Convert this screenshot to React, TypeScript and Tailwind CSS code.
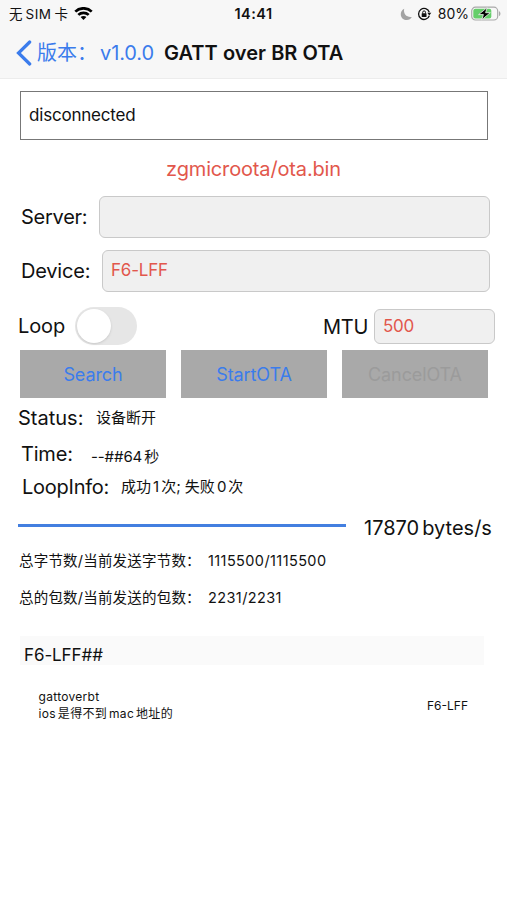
import React from 'react';

interface ActionProps {
  label: string;
  disabled?: boolean;
}

interface TotalProps {
  label: string;
  value: string;
}

const StatusBar = () => {
  return (
    <div className="flex h-[28px] items-center justify-between pl-[9px] pr-[6px] text-sm">
      <div className="flex w-[180px] items-center">
        <p className="pt-[1px] text-[13.5px]">无<span className="ml-[3px] mr-[3px] tracking-[0.5px]">SIM</span>卡</p>
        <svg className="ml-[6px] h-[14px] w-[19px]" viewBox="0 0 19 14" fill="none" stroke="#000" strokeWidth="2.7">
          <path d="M1.3 4.6C5.8 0.2 13.2 0.2 17.7 4.6" />
          <path d="M4.3 7.9C7.2 5.1 11.8 5.1 14.7 7.9" />
          <path d="M9.5 13.1L6.6 10.1C8.2 8.7 10.8 8.7 12.4 10.1Z" fill="#000" stroke="none" />
        </svg>
      </div>
      <p className="mr-[3px] text-[14.5px] font-semibold tracking-[0.5px]">14:41</p>
      <div className="flex w-[180px] items-center justify-end">
        <svg className="h-[13px] w-[13px]" viewBox="0 0 13 13" fill="#a3a3a3">
          <path d="M4.2 0.8C1.9 1.9 0.5 4.2 0.8 6.9C1.2 10.1 3.8 12.1 6.9 12C9.1 11.9 10.9 10.8 11.8 8.9C7 9.7 3 6.2 4.2 0.8Z" />
        </svg>
        <svg className="ml-[4px] h-[14px] w-[15px]" viewBox="0 0 15 14" fill="none" stroke="#111">
          <path d="M12.3 8.7A5.5 5.5 0 1 1 12.3 5.2" strokeWidth="1.3" />
          <path d="M10.3 5.7H14.3L12.3 8.4Z" fill="#111" stroke="none" />
          <rect x="4.7" y="6.3" width="4.8" height="3.7" rx="0.5" fill="#111" stroke="none" />
          <path d="M5.7 6.5V5.3A1.4 1.4 0 0 1 8.5 5.3V6.5" strokeWidth="1" />
        </svg>
        <p className="ml-[6px] text-[14px]">80%</p>
        <svg className="ml-[2px] h-[16px] w-[30px]" viewBox="0 0 30 16">
          <rect x="0.7" y="1.2" width="26" height="12.8" rx="3.8" fill="none" stroke="#a9a9a9" strokeWidth="1.2" />
          <path d="M28 5.2C29.9 5.7 29.9 9.5 28 10Z" fill="#a9a9a9" />
          <rect x="2.3" y="2.8" width="18" height="9.6" rx="2" fill="#65ce6a" />
          <path d="M16.2 1.6L7.6 8.6H12.4L10.8 13.7L19.3 6.700H14.600Z" fill="#000" stroke="#f7f7f7" strokeWidth="0.8" />
        </svg>
      </div>
    </div>
  );
};

const NavBar = () => {
  return (
    <div className="flex h-[50px] items-center pl-[16px]">
      <svg className="h-[26px] w-[16px]" viewBox="0 0 16 26" fill="none" stroke="#3b7cec" strokeWidth="3.2" strokeLinecap="round">
        <path d="M13.7 2L2.5 13L13.7 24" />
      </svg>
      <p className="ml-[5px] w-[63px] whitespace-nowrap text-[20px] text-[#3b7cec]">版本：</p>
      <p className="w-[64px] whitespace-nowrap text-[20px] tracking-[-0.1px] text-[#3b7cec]">v1.0.0</p>
      <p className="whitespace-nowrap text-[20px] font-semibold tracking-[0.05px]">GATT over BR OTA</p>
    </div>
  );
};

const ActionButton = (props: ActionProps) => {
  return (
    <button
      disabled={props.disabled}
      className={`h-[48px] w-[146px] bg-[#a9a9a9] pt-[1px] text-[18px] tracking-[-0.1px] ${props.disabled ? 'text-[#9b9b9b]' : 'text-[#3b7cec]'}`}
    >
      {props.label}
    </button>
  );
};

const TotalRow = (props: TotalProps) => {
  return (
    <div className="flex h-[37px] items-center pl-[19px] text-[14.5px] tracking-[0.2px]">
      <p className="w-[189px] whitespace-nowrap">{props.label}</p>
      <p className="tracking-[0.4px]">{props.value}</p>
    </div>
  );
};

const App = () => {
  return (
    <div className="h-[900px] w-[507px] overflow-hidden bg-white font-['Inter','Noto_Sans_CJK_SC',sans-serif] text-[#111]">
      <div className="h-[79px] border-b border-[#ececec] bg-[#f7f7f7]">
        <StatusBar />
        <NavBar />
      </div>

      <div className="ml-[20px] mt-[12px] flex h-[49px] w-[468px] items-center border border-[#777] pl-[8px] text-[17px] tracking-[-0.2px]">
        disconnected
      </div>
      <p className="flex h-[56px] items-center justify-center pt-[2px] text-[20px] tracking-[-0.15px] text-[#e2574c]">zgmicroota/ota.bin</p>

      <div className="flex h-[42px] items-center pl-[21px] text-[20px]">
        <p className="w-[78px] tracking-[-0.25px]">Server:</p>
        <div className="h-[42px] w-[391px] rounded-[6px] border border-[#c9c9c9] bg-[#f0f0f0]"></div>
      </div>
      <div className="mt-[12px] flex h-[42px] items-center pl-[21px] text-[20px]">
        <p className="w-[81px] tracking-[-0.2px]">Device:</p>
        <div className="flex h-[42px] w-[388px] items-center rounded-[6px] border border-[#c9c9c9] bg-[#f0f0f0] pl-[8px] text-[17px] tracking-[-0.2px] text-[#e2574c]">
          F6-LFF
        </div>
      </div>

      <div className="mt-[14px] flex h-[44px] items-center pb-[4px] pl-[18px] text-[20px]">
        <p className="w-[57px] tracking-[-0.1px]">Loop</p>
        <div className="flex h-[38px] w-[62px] items-center rounded-full bg-[#e6e6e6] pl-[2px]">
          <div className="h-[34px] w-[34px] rounded-full bg-white shadow-sm"></div>
        </div>
        <p className="ml-[186px] w-[51px] pt-[2px] tracking-[-0.3px]">MTU</p>
        <div className="flex h-[35px] w-[121px] items-center rounded-[6px] border border-[#c9c9c9] bg-[#f0f0f0] pl-[8px] pt-[1px] text-[17px] tracking-[-0.3px] text-[#e2574c]">
          500
        </div>
      </div>

      <div className="flex gap-[15px] pl-[20px]">
        <ActionButton label="Search" />
        <ActionButton label="StartOTA" />
        <ActionButton label="CancelOTA" disabled />
      </div>

      <div className="flex h-[40px] items-center pl-[18px]">
        <p className="w-[78px] text-[20px]">Status:</p>
        <p className="text-[15px]">设备断开</p>
      </div>
      <div className="flex h-[32px] items-center pl-[21px]">
        <p className="w-[70px] text-[20px] tracking-[-0.2px]">Time:</p>
        <p className="pt-[7px] text-[15px] tracking-[-0.1px]">--##64<span className="ml-[2px]">秒</span></p>
      </div>
      <div className="flex h-[34px] items-center pl-[22px]">
        <p className="w-[99px] text-[20px] tracking-[-0.25px]">LoopInfo:</p>
        <p className="pt-[1px] text-[15px]">成功<span className="mx-[2px]">1</span>次; 失败<span className="mx-[2px]">0</span>次</p>
      </div>

      <div className="flex h-[38px] items-center pl-[18px] pt-[5px]">
        <div className="h-[3px] w-[328px] bg-[#437fe0]"></div>
        <p className="ml-[18px] whitespace-nowrap pt-[4px] text-[20px]">17870<span className="ml-[3px]">bytes/s</span></p>
      </div>

      <TotalRow label="总字节数/当前发送字节数：" value="1115500/1115500" />
      <TotalRow label="总的包数/当前发送的包数：" value="2231/2231" />

      <div className="ml-[20px] mt-[20px] flex h-[29px] w-[464px] items-center bg-[#fafafa] pl-[4px] pt-[10px] text-[17px] tracking-[-0.1px]">
        F6-LFF##
      </div>
      <div className="mt-[23px] flex items-center justify-between pl-[38.5px] pr-[39px] text-[12px] leading-[17px]">
        <div className="tracking-[0.3px]">
          <p>gattoverbt</p>
          <p>ios<span className="mx-[2px]">是得不到</span>mac<span className="ml-[2px]">地址的</span></p>
        </div>
        <p>F6-LFF</p>
      </div>
    </div>
  );
};

export default App;
